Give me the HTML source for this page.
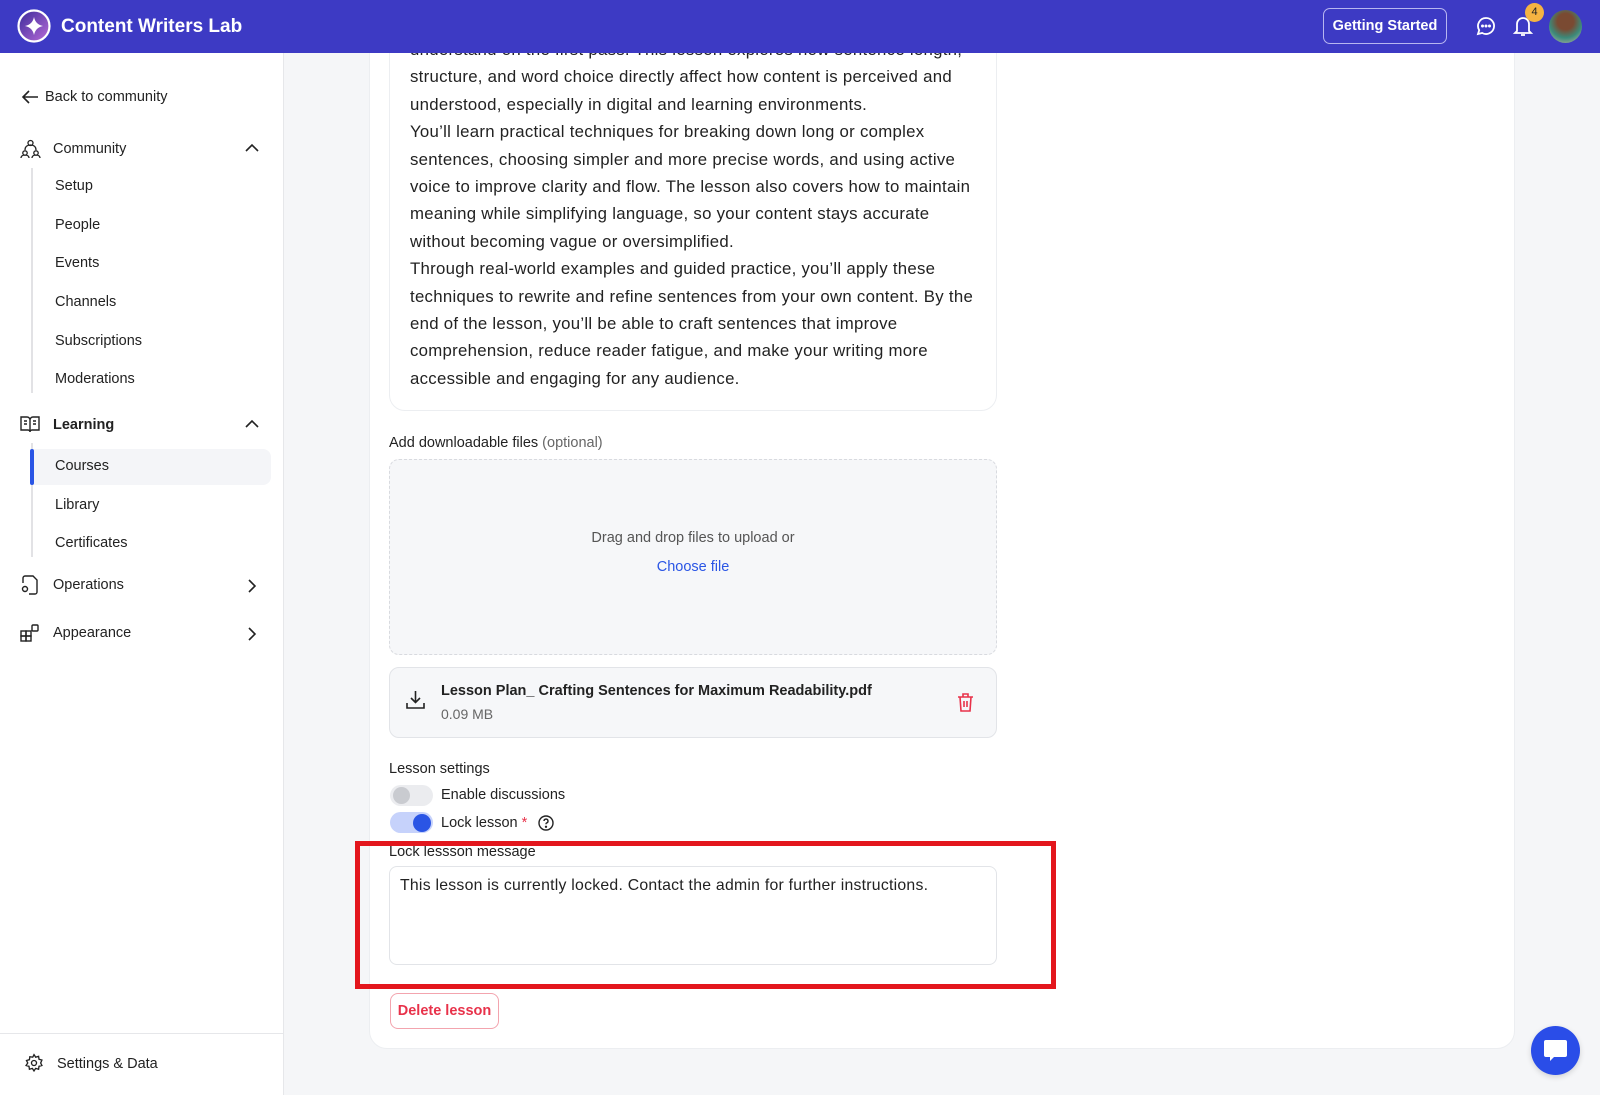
<!DOCTYPE html>
<html><head><meta charset="utf-8"><style>
*{box-sizing:border-box;margin:0;padding:0}
body{width:1600px;height:1095px;overflow:hidden;font-family:"Liberation Sans",sans-serif;background:#f5f6f8;position:relative;color:#1f2328}
.a{position:absolute}
.hdr{left:0;top:0;width:1600px;height:53px;background:#3d3ac4;z-index:5}
.side{left:0;top:53px;width:284px;height:1042px;background:#fff;border-right:1px solid #e6e7ea}
.si{position:absolute;font-size:14.5px;color:#222;line-height:18px}
.sub{left:55px}
.card{left:369px;top:0;width:1146px;height:1049px;background:#fff;border:1px solid #eceef1;border-radius:0 0 18px 18px}
.ed{left:389px;top:0;width:608px;height:411px;border:1px solid #eceef1;border-radius:0 0 16px 16px}
.txt{left:410px;top:36px;font-size:16.8px;letter-spacing:.28px;line-height:27.4px;color:#222;width:600px;white-space:nowrap}
.lbl{font-size:14.5px;color:#222}
</style></head><body>
<div class="a hdr">
 <svg class="a" style="left:17px;top:9px" width="34" height="34" viewBox="0 0 34 34"><defs><linearGradient id="g" x1="0" y1="0" x2="1" y2="1"><stop offset="0" stop-color="#3a2a9a"/><stop offset="1" stop-color="#b86bd8"/></linearGradient></defs><circle cx="17" cy="17" r="15.5" fill="url(#g)" stroke="#fff" stroke-width="2.2"/><path d="M17 8 Q18.5 15.5 26 17 Q18.5 18.5 17 26 Q15.5 18.5 8 17 Q15.5 15.5 17 8Z" fill="#fff"/></svg>
 <div class="a" style="left:61px;top:16px;color:#fff;font-weight:bold;font-size:19px">Content Writers Lab</div>
 <div class="a" style="left:1323px;top:8px;width:124px;height:36px;border:1px solid #b8b6f0;border-radius:7px;color:#fff;font-size:14.5px;font-weight:bold;text-align:center;line-height:34px">Getting Started</div>
 <svg class="a" style="left:1475px;top:15px" width="22" height="22" viewBox="0 0 22 22" fill="none" stroke="#fff" stroke-width="1.8"><path d="M11 3a8 8 0 1 1-3.8 15L3 19l1.2-3.8A8 8 0 0 1 11 3z"/><circle cx="7.5" cy="11" r=".6" fill="#fff"/><circle cx="11" cy="11" r=".6" fill="#fff"/><circle cx="14.5" cy="11" r=".6" fill="#fff"/></svg>
 <svg class="a" style="left:1512px;top:14px" width="22" height="24" viewBox="0 0 22 24" fill="none" stroke="#fff" stroke-width="1.8"><path d="M5 17V10a6 6 0 0 1 12 0v7l2 2H3z"/><path d="M9 21h4"/></svg>
 <div class="a" style="left:1525px;top:3px;width:19px;height:19px;border-radius:50%;background:#f5b342;color:#222;font-size:11px;text-align:center;line-height:19px">4</div>
 <div class="a" style="left:1549px;top:10px;width:33px;height:33px;border-radius:50%;background:radial-gradient(circle at 50% 35%,#7a4a32 0 30%,#3b8a7a 60%,#c9b8a8 100%)"></div>
</div>
<div class="a side">
 <svg class="a" style="left:21px;top:36px" width="18" height="16" viewBox="0 0 18 16" fill="none" stroke="#222" stroke-width="1.6"><path d="M17 8H2M8 2L2 8l6 6"/></svg>
 <div class="si" style="left:45px;top:35px">Back to community</div>
 <svg class="a" style="left:20px;top:86px" width="21" height="20" viewBox="0 0 21 20" fill="none" stroke="#222" stroke-width="1.3"><circle cx="10.5" cy="4" r="2.5"/><circle cx="5" cy="14" r="2.2"/><circle cx="16" cy="14" r="2.2"/><path d="M1 19c0-2 2-3 4-3s4 1 4 3M12 19c0-2 2-3 4-3s4 1 4 3M5 11c0-4 3-5 5.5-5S16 7 16 11"/></svg>
 <div class="si" style="left:53px;top:87px">Community</div>
 <svg class="a" style="left:245px;top:90px" width="14" height="9" viewBox="0 0 14 9" fill="none" stroke="#222" stroke-width="1.6"><path d="M1 8l6-6 6 6"/></svg>
 <div class="a" style="left:31px;top:115px;width:2px;height:225px;background:#e2e2e5"></div>
 <div class="si sub" style="top:124px">Setup</div>
 <div class="si sub" style="top:163px">People</div>
 <div class="si sub" style="top:201px">Events</div>
 <div class="si sub" style="top:240px">Channels</div>
 <div class="si sub" style="top:279px">Subscriptions</div>
 <div class="si sub" style="top:317px">Moderations</div>
 <svg class="a" style="left:20px;top:362px" width="20" height="18" viewBox="0 0 20 18" fill="none" stroke="#222" stroke-width="1.4"><path d="M1 2h6a3 3 0 0 1 3 3v12a2 2 0 0 0-2-2H1zM19 2h-6a3 3 0 0 0-3 3v12a2 2 0 0 1 2-2h7z"/><path d="M4 6h3M4 9h3M13 6h3M13 9h3"/></svg>
 <div class="si" style="left:53px;top:363px;font-weight:bold">Learning</div>
 <svg class="a" style="left:245px;top:366px" width="14" height="9" viewBox="0 0 14 9" fill="none" stroke="#222" stroke-width="1.6"><path d="M1 8l6-6 6 6"/></svg>
 <div class="a" style="left:31px;top:390px;width:2px;height:114px;background:#e2e2e5"></div>
 <div class="a" style="left:31px;top:396px;width:240px;height:36px;background:#f4f5f8;border-radius:0 8px 8px 0"></div>
 <div class="a" style="left:30px;top:396px;width:4px;height:36px;background:#2a55e5;border-radius:2px"></div>
 <div class="si sub" style="top:404px">Courses</div>
 <div class="si sub" style="top:443px">Library</div>
 <div class="si sub" style="top:481px">Certificates</div>
 <svg class="a" style="left:20px;top:522px" width="20" height="20" viewBox="0 0 20 20" fill="none" stroke="#222" stroke-width="1.4"><path d="M3 8V3a2 2 0 0 1 2-2h8l4 4v12a2 2 0 0 1-2 2H9"/><circle cx="5" cy="14" r="2.5"/></svg>
 <div class="si" style="left:53px;top:523px">Operations</div>
 <svg class="a" style="left:248px;top:526px" width="9" height="14" viewBox="0 0 9 14" fill="none" stroke="#222" stroke-width="1.6"><path d="M1 1l6 6-6 6"/></svg>
 <svg class="a" style="left:20px;top:570px" width="20" height="20" viewBox="0 0 20 20" fill="none" stroke="#222" stroke-width="1.4"><rect x="1" y="8" width="5" height="5"/><rect x="6" y="8" width="5" height="5"/><rect x="1" y="13" width="5" height="5"/><rect x="6" y="13" width="5" height="5"/><rect x="12" y="2" width="6" height="6" rx="1"/></svg>
 <div class="si" style="left:53px;top:571px">Appearance</div>
 <svg class="a" style="left:248px;top:574px" width="9" height="14" viewBox="0 0 9 14" fill="none" stroke="#222" stroke-width="1.6"><path d="M1 1l6 6-6 6"/></svg>
 <div class="a" style="left:0;top:980px;width:284px;height:1px;background:#e6e7ea"></div>
 <svg class="a" style="left:24px;top:1000px" width="20" height="20" viewBox="0 0 24 24" fill="none" stroke="#222" stroke-width="1.6"><circle cx="12" cy="12" r="3"/><path d="M12 2l2 3 3.5-1 .5 3.5 3.5 1-1.5 3.5 1.5 3-3.5 1-.5 3.5-3.5-1-2 3-2-3-3.5 1-.5-3.5-3.5-1L4.5 12 3 9l3.5-1L7 4.5 10.5 5z"/></svg>
 <div class="si" style="left:57px;top:1002px">Settings &amp; Data</div>
</div>
<div class="a card"></div>
<div class="a ed"></div>
<div class="a txt" style="top:36px">understand on the first pass. This lesson explores how sentence length,<br>structure, and word choice directly affect how content is perceived and<br>understood, especially in digital and learning environments.<br>You’ll learn practical techniques for breaking down long or complex<br>sentences, choosing simpler and more precise words, and using active<br>voice to improve clarity and flow. The lesson also covers how to maintain<br>meaning while simplifying language, so your content stays accurate<br>without becoming vague or oversimplified.<br>Through real-world examples and guided practice, you’ll apply these<br>techniques to rewrite and refine sentences from your own content. By the<br>end of the lesson, you’ll be able to craft sentences that improve<br>comprehension, reduce reader fatigue, and make your writing more<br>accessible and engaging for any audience.</div>
<div class="a lbl" style="left:389px;top:435px">Add downloadable files <span style="color:#666">(optional)</span></div>
<div class="a" style="left:389px;top:459px;width:608px;height:196px;background:#f6f7f9;border:1px dashed #d8dadf;border-radius:10px"></div>
<div class="a" style="left:389px;top:530px;width:608px;text-align:center;font-size:14.5px;color:#555">Drag and drop files to upload or</div>
<div class="a" style="left:389px;top:559px;width:608px;text-align:center;font-size:14.5px;color:#2a55e5">Choose file</div>
<div class="a" style="left:389px;top:667px;width:608px;height:71px;background:#f6f7f9;border:1px solid #e2e4e8;border-radius:10px"></div>
<svg class="a" style="left:406px;top:690px" width="19" height="19" viewBox="0 0 19 19" fill="none" stroke="#222" stroke-width="1.6"><path d="M9.5 1v11M5 8l4.5 4.5L14 8M1 13v5h17v-5"/></svg>
<div class="a" style="left:441px;top:683px;font-size:14.5px;font-weight:bold;color:#222">Lesson Plan_ Crafting Sentences for Maximum Readability.pdf</div>
<div class="a" style="left:441px;top:706px;font-size:14px;color:#666">0.09 MB</div>
<svg class="a" style="left:957px;top:693px" width="17" height="19" viewBox="0 0 17 19" fill="none" stroke="#e8324a" stroke-width="1.6"><path d="M1 4h15M6 4V1h5v3M3 4l1 14h9l1-14M7 8v6M10 8v6"/></svg>
<div class="a lbl" style="left:389px;top:761px">Lesson settings</div>
<div class="a" style="left:390px;top:785px;width:43px;height:21px;border-radius:11px;background:#ebecef"></div>
<div class="a" style="left:393px;top:787px;width:17px;height:17px;border-radius:50%;background:#c9cbd0"></div>
<div class="a lbl" style="left:441px;top:787px">Enable discussions</div>
<div class="a" style="left:390px;top:812px;width:43px;height:21px;border-radius:11px;background:#c6d2fb"></div>
<div class="a" style="left:413px;top:814px;width:18px;height:18px;border-radius:50%;background:#2a55e5"></div>
<div class="a lbl" style="left:441px;top:815px">Lock lesson <span style="color:#e8324a">*</span></div>
<svg class="a" style="left:538px;top:815px" width="16" height="16" viewBox="0 0 16 16" fill="none" stroke="#222" stroke-width="1.4"><circle cx="8" cy="8" r="7"/><path d="M6 6a2 2 0 1 1 2.5 2c-.5.2-.5.7-.5 1.3"/><circle cx="8" cy="11.8" r=".5" fill="#222"/></svg>
<div class="a lbl" style="left:389px;top:844px">Lock lessson message</div>
<div class="a" style="left:389px;top:866px;width:608px;height:99px;border:1px solid #e2e4e8;border-radius:8px;background:#fff"></div>
<div class="a" style="left:400px;top:877px;font-size:15.8px;letter-spacing:.25px;color:#222">This lesson is currently locked. Contact the admin for further instructions.</div>
<div class="a" style="left:355px;top:841px;width:701px;height:148px;border:5px solid #e3161d"></div>
<div class="a" style="left:390px;top:993px;width:109px;height:36px;border:1px solid #f3a4ae;border-radius:8px;color:#e8324a;font-weight:bold;font-size:14.5px;text-align:center;line-height:34px">Delete lesson</div>
<div class="a" style="left:1531px;top:1026px;width:49px;height:49px;border-radius:50%;background:#2a4de8;box-shadow:0 2px 6px rgba(0,0,0,.15)"></div>
<svg class="a" style="left:1543px;top:1039px" width="25" height="24" viewBox="0 0 25 24"><path d="M3 1h19a2 2 0 0 1 2 2v13a2 2 0 0 1-2 2H11l-4 4v-4H3a2 2 0 0 1-2-2V3a2 2 0 0 1 2-2z" fill="#fff"/></svg>
</body></html>
